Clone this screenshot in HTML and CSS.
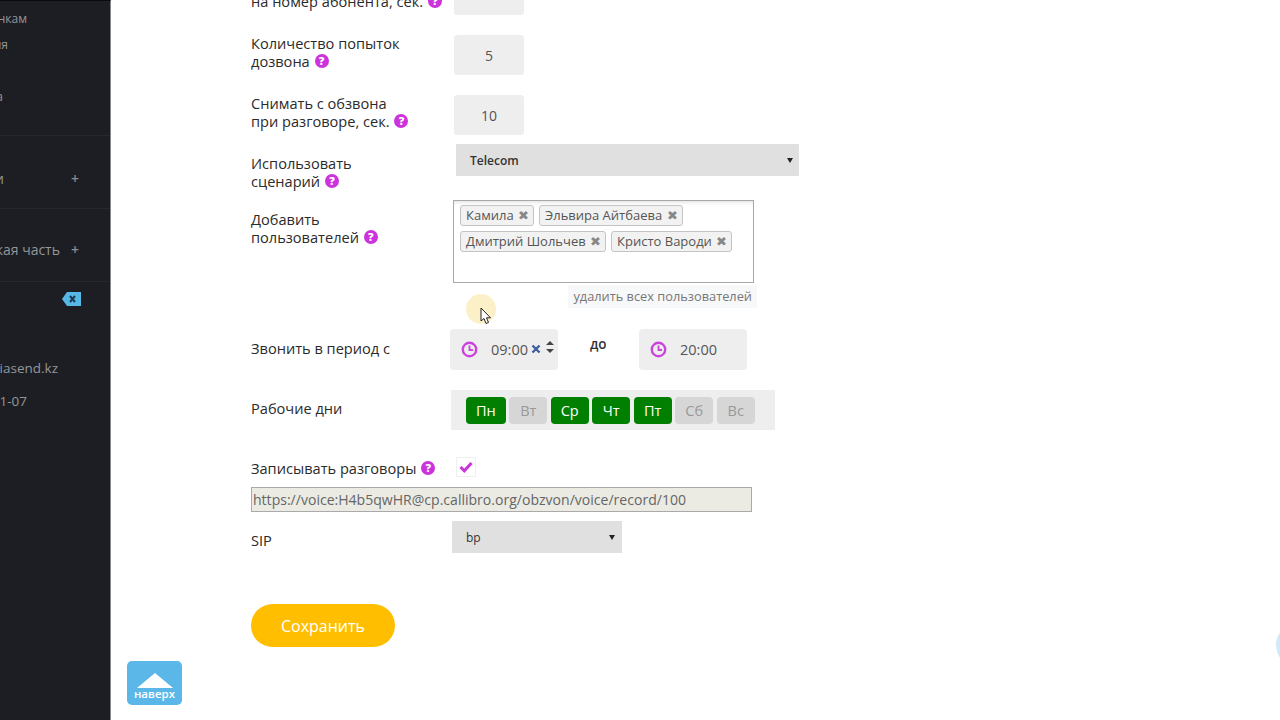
FILE: index.html
```html
<!DOCTYPE html>
<html lang="ru">
<head>
    <meta charset="UTF-8">
    <meta name="viewport" content="width=device-width, initial-scale=1.0">
    <title>Настройки обзвона</title>
    <link rel="stylesheet" href="styles.css">
</head>
<body>
    <div class="layout">
        <aside class="sidebar">
            <div class="side-item side-calls">Отчёт по звонкам</div>
            <div class="side-item side-history">История</div>
            <div class="side-item side-stat">Статистика</div>
            <div class="side-line side-line-first"></div>
            <div class="side-item side-plus side-contacts"><span>Контакты и группы и</span><b>+</b></div>
            <div class="side-line"></div>
            <div class="side-item side-plus side-tech"><span>Техническая часть</span><b>+</b></div>
            <div class="side-line"></div>
            <div class="side-tag">
                <svg width="19" height="14" viewBox="0 0 19 14">
                    <path d="M5 0H19V14H5L0 7Z" fill="#55b8e6"/>
                    <path d="M8 4l5 6M13 4l-5 6" stroke="#1d3a50" stroke-width="2"/>
                </svg>
            </div>
            <div class="side-item side-mail">info@mediasend.kz</div>
            <div class="side-item side-date">2019-11-07</div>
        </aside>

        <main class="content">
            <div class="row row-number">
                <div class="label">Ожидание ответа<br>на номер абонента, сек. <span class="help">?</span></div>
                <input class="field" type="text" value="">
            </div>
            <div class="row row-number">
                <div class="label">Количество попыток<br>дозвона <span class="help">?</span></div>
                <input class="field" type="text" value="5">
            </div>
            <div class="row row-number">
                <div class="label">Снимать с обзвона<br>при разговоре, сек. <span class="help">?</span></div>
                <input class="field" type="text" value="10">
            </div>
            <div class="row row-scenario">
                <div class="label">Использовать<br>сценарий <span class="help">?</span></div>
                <div class="select select-wide">Telecom</div>
            </div>
            <div class="row row-users">
                <div class="label">Добавить<br>пользователей <span class="help">?</span></div>
                <div class="tags">
                    <span class="tag">Камила <i>✖</i></span>
                    <span class="tag">Эльвира Айтбаева <i>✖</i></span>
                    <span class="tag">Дмитрий Шольчев <i>✖</i></span>
                    <span class="tag">Кристо Вароди <i>✖</i></span>
                </div>
            </div>
            <div class="remove-wrap"><a class="remove-all">удалить всех пользователей</a></div>
            <div class="row row-time">
                <div class="label">Звонить в период с</div>
                <div class="time-group">
                    <div class="time">
                        <svg class="clock" width="17" height="17" viewBox="0 0 17 17">
                            <circle cx="8.5" cy="8.5" r="6.700" fill="none" stroke="#cc44dd" stroke-width="2.400"/>
                            <path d="M8.500 4.500v4.500h3.500" fill="none" stroke="#cc44dd" stroke-width="1.800"/>
                        </svg>
                        <span>09:00</span>
                        <svg class="clear" width="10" height="10" viewBox="0 0 10 10">
                            <path d="M1.500 1.500l7 7M8.500 1.500l-7 7" stroke="#3d5f9e" stroke-width="2.400"/>
                        </svg>
                        <svg class="spin" width="8" height="14" viewBox="0 0 8 14">
                            <path d="M4 1L8 5H0ZM0 9H8L4 13Z" fill="#444"/>
                        </svg>
                    </div>
                    <div class="time-to">до</div>
                    <div class="time">
                        <svg class="clock" width="17" height="17" viewBox="0 0 17 17">
                            <circle cx="8.5" cy="8.5" r="6.700" fill="none" stroke="#cc44dd" stroke-width="2.400"/>
                            <path d="M8.500 4.500v4.500h3.500" fill="none" stroke="#cc44dd" stroke-width="1.800"/>
                        </svg>
                        <span>20:00</span>
                    </div>
                </div>
            </div>
            <div class="row row-days">
                <div class="label">Рабочие дни</div>
                <div class="days">
                    <span class="day on">Пн</span>
                    <span class="day">Вт</span>
                    <span class="day on">Ср</span>
                    <span class="day on">Чт</span>
                    <span class="day on">Пт</span>
                    <span class="day">Сб</span>
                    <span class="day">Вс</span>
                </div>
            </div>
            <div class="row row-record">
                <div class="label">Записывать разговоры <span class="help">?</span></div>
                <div class="check">
                    <svg width="14" height="12" viewBox="0 0 14 12">
                        <path d="M1.500 6l3.800 3.800L12.500 2" fill="none" stroke="#cc33dd" stroke-width="3"/>
                    </svg>
                </div>
            </div>
            <input class="record-url" type="text" value="https://voice:H4b5qwHR@cp.callibro.org/obzvon/voice/record/100" readonly>
            <div class="row row-sip">
                <div class="label">SIP</div>
                <div class="select select-sip">bp</div>
            </div>
            <button class="save">Сохранить</button>
        </main>
    </div>

    <!-- лежат поверх страницы -->
    <a class="to-top">
        <span class="to-top-arrow"></span>
        <span class="to-top-text">наверх</span>
    </a>
    <div class="cursor-spot"></div>
    <svg class="cursor" width="12" height="18" viewBox="0 0 12 18">
        <path d="M1 1V14L4 11.500L6 16.500L8.500 15.500L6.500 10.800H10.500Z" fill="#fff" stroke="#222" stroke-width="1"/>
    </svg>
    <div class="chat-edge"></div>
</body>
</html>
```

FILE: styles.css
```css
html, body {
    margin: 0;
    height: 100%;
    overflow: hidden;
    background: #fff;
}
body {
    font-family: "Open Sans", sans-serif;
    font-size: 14px;
    color: #333;
}
.layout {
    display: flex;
    height: 720px;
}

/* левое меню, текст обрезан по левому краю */
.sidebar {
    flex: 0 0 110px;
    height: 719px;
    background: #1c1e24;
    border-top: 1px solid #0a0a0c;
    border-right: 1px solid #85868a;
    overflow: hidden;
    display: flex;
    flex-direction: column;
    color: #94969a;
}
.side-item {
    display: flex;
    justify-content: flex-end;
    align-items: center;
    flex-shrink: 0;
    white-space: nowrap;
    line-height: 18px;
    height: 18px;
}
.side-item span {
    flex-shrink: 0;
}
.side-calls {
    margin-top: 9px;
    padding-right: 83px;
    font-size: 12px;
}
.side-history {
    margin-top: 8px;
    padding-right: 102px;
    font-size: 12px;
}
.side-stat {
    margin-top: 34px;
    padding-right: 107px;
    font-size: 12px;
}
.side-line {
    flex-shrink: 0;
    height: 1px;
    background: #26282e;
}
.side-line-first {
    margin-top: 29px;
}
.side-plus b {
    flex: 0 0 auto;
    font-weight: 600;
    font-size: 14px;
    color: #8b8d91;
}
.side-contacts {
    margin-top: 34px;
    padding-right: 31px;
    font-size: 14px;
    margin-bottom: 20px;
}
.side-contacts span {
    margin-right: 67px;
}
.side-tech {
    margin-top: 32px;
    padding-right: 31px;
    margin-bottom: 22px;
}
.side-tech span {
    margin-right: 11px;
}
.side-tag {
    display: flex;
    justify-content: flex-end;
    padding-right: 29px;
    margin-top: 10px;
}
.side-mail {
    margin-top: 53px;
    padding-right: 52px;
    font-size: 13.500px;
}
.side-date {
    margin-top: 15px;
    padding-right: 83px;
    font-size: 13.500px;
}

/* форма, страница прокручена вниз */
.content {
    flex: 1;
    display: flex;
    flex-direction: column;
    align-items: flex-start;
    margin-top: -25px;
    padding-left: 140px;
}
.row {
    display: grid;
    grid-template-columns: 202px auto;
    align-items: start;
}
.label {
    font-size: 14.600px;
    line-height: 18px;
    color: #2b2b2b;
    white-space: nowrap;
}
.help {
    display: inline-flex;
    align-items: center;
    justify-content: center;
    width: 14px;
    height: 14px;
    margin-left: 1px;
    vertical-align: 2px;
    border-radius: 50%;
    background: #cc33dd;
    color: #fff;
    font-size: 11px;
    font-weight: 800;
    line-height: 14px;
}
.row-number {
    height: 40px;
    margin-bottom: 20px;
}
.row-number .label {
    margin-top: -1px;
}
.field {
    width: 70px;
    height: 40px;
    margin-left: 1px;
    box-sizing: border-box;
    border: 0;
    border-radius: 3px;
    background: #eeeeee;
    color: #555;
    font-family: inherit;
    font-size: 14px;
    text-align: center;
    padding: 0;
}
.select {
    position: relative;
    box-sizing: border-box;
    height: 32px;
    background: #e0e0e0;
    color: #333;
    font-size: 12px;
    font-weight: 600;
    line-height: 34px;
}
.select::after {
    content: "";
    position: absolute;
    top: 14px;
    border-left: 3px solid transparent;
    border-right: 3px solid transparent;
    border-top: 5px solid #222;
}
.select-wide {
    width: 343px;
    margin-left: 3px;
    padding-left: 14px;
}
.select-wide::after {
    right: 6px;
}
.select-sip {
    width: 170px;
    margin-left: -1px;
    padding-left: 14px;
    font-weight: 400;
}
.select-sip::after {
    right: 7px;
}
.row-scenario {
    margin-top: -11px;
    height: 46px;
}
.row-scenario .label, .row-users .label, .row-time .label, .row-sip .label {
    padding-top: 10px;
}
.row-users {
    margin-top: 10px;
}
.tags {
    box-sizing: border-box;
    width: 301px;
    height: 83px;
    border: 1px solid #a8a8a8;
    padding: 4px 6px;
    display: flex;
    flex-wrap: wrap;
    align-content: flex-start;
    gap: 5px;
    box-shadow: inset 0 4px 4px -3px #ddd;
}
.tag {
    box-sizing: border-box;
    height: 21px;
    padding: 0 4px 0 5px;
    border: 1px solid #c4c4c4;
    border-radius: 3px;
    background: #f2f2f2;
    color: #555;
    font-size: 13px;
    line-height: 18px;
    white-space: nowrap;
}
.tag i {
    margin-left: 1px;
    font-style: normal;
    font-size: 13px;
    color: #888;
}
.remove-wrap {
    display: flex;
    justify-content: flex-end;
    width: 506px;
    margin-top: 2px;
}
.remove-all {
    padding: 2px 5px 3px;
    background: #f7f8fa;
    color: #777;
    font-size: 12.800px;
    line-height: 18px;
}
.row-time {
    margin-top: 21px;
}
.time-group {
    display: flex;
    margin-left: -3px;
}
.time {
    display: flex;
    align-items: center;
    box-sizing: border-box;
    width: 108px;
    height: 41px;
    padding: 0 0 1px 11px;
    border-radius: 4px;
    background: #eeeeee;
    color: #555;
    font-size: 14.500px;
}
.clock {
    margin-right: 13px;
}
.clear {
    margin-left: 3px;
}
.spin {
    margin-left: 5px;
    margin-bottom: 4px;
}
.time-to {
    width: 81px;
    padding: 6px 0 0 32px;
    box-sizing: border-box;
    font-size: 13.500px;
    font-weight: 600;
    line-height: 18px;
    color: #333;
}
.row-days {
    margin-top: 20px;
}
.row-days .label {
    padding-top: 9px;
}
.days {
    display: flex;
    gap: 3.500px;
    box-sizing: border-box;
    width: 324px;
    height: 40px;
    margin-left: -2px;
    padding: 7px 15px;
    background: #eeeeee;
}
.day {
    box-sizing: border-box;
    min-width: 38px;
    height: 27px;
    padding: 0 10px;
    border-radius: 4px;
    background: #d6d6d6;
    color: #999;
    font-size: 14.500px;
    line-height: 27px;
    text-align: center;
}
.day.on {
    background: #007f00;
    color: #fff;
}
.row-record {
    margin-top: 27px;
    height: 30px;
}
.row-record .label {
    padding-top: 2px;
}
.check {
    display: flex;
    align-items: center;
    justify-content: center;
    box-sizing: border-box;
    width: 20px;
    height: 20px;
    margin-left: 3px;
    border: 1px solid #f0f0f0;
}
.record-url {
    box-sizing: border-box;
    width: 501px;
    height: 25px;
    padding: 0 1px;
    border: 1px solid #aaa;
    border-radius: 0;
    background: #ebebe4;
    color: #666;
    font-family: inherit;
    font-size: 14.050px;
}
.row-sip {
    margin-top: 9px;
}
.save {
    width: 144px;
    height: 43px;
    margin-top: 51px;
    border: 0;
    border-radius: 22px;
    background: #ffbf00;
    color: #fff;
    font-family: inherit;
    font-size: 16px;
    cursor: pointer;
}

/* плавающие элементы */
.to-top {
    position: absolute;
    left: 127px;
    top: 661px;
    width: 55px;
    height: 44px;
    border-radius: 5px;
    background: #5bb7e8;
    display: flex;
    flex-direction: column;
    align-items: center;
}
.to-top-arrow {
    margin-top: 12px;
    border-left: 18px solid transparent;
    border-right: 18px solid transparent;
    border-bottom: 15px solid #fff;
}
.to-top-text {
    color: #fff;
    font-size: 11.500px;
    font-weight: 600;
    line-height: 12px;
}
.cursor-spot {
    position: absolute;
    left: 466px;
    top: 294px;
    width: 30px;
    height: 30px;
    border-radius: 50%;
    background: #fbf0c8;
}
.cursor {
    position: absolute;
    left: 480px;
    top: 307px;
}
.chat-edge {
    position: absolute;
    left: 1276px;
    top: 623px;
    width: 44px;
    height: 44px;
    border-radius: 50%;
    background: #cfeaf8;
}
```
